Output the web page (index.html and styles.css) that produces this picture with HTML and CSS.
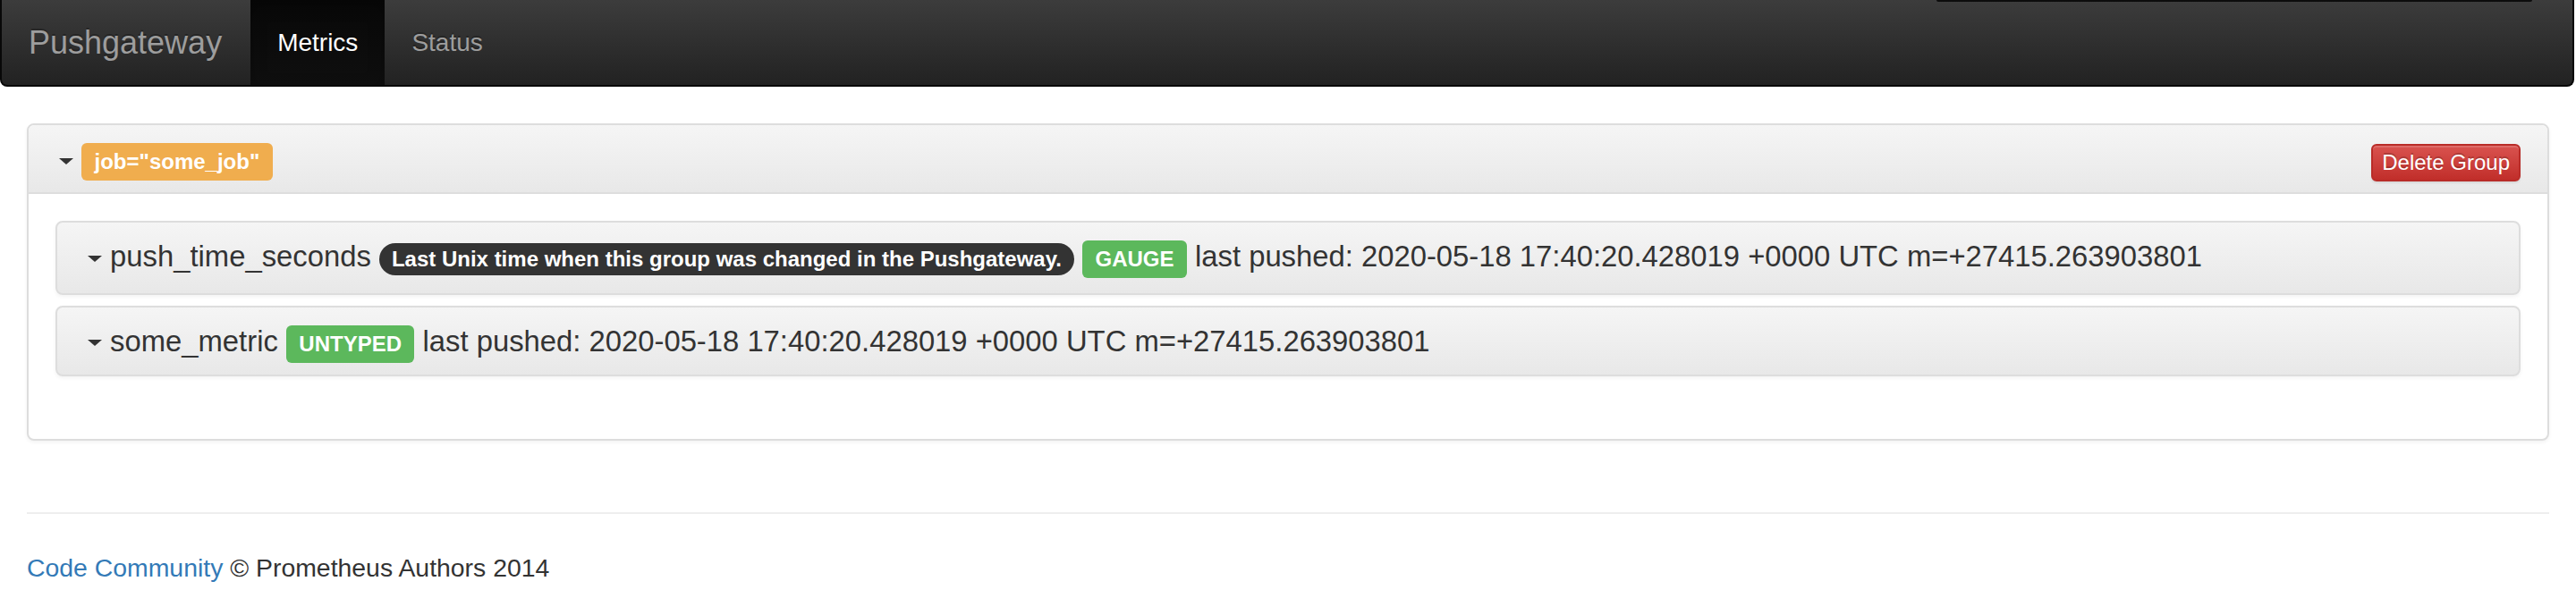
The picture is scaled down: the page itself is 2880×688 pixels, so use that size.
FILE: index.html
```html
<!DOCTYPE html>
<html lang="en">
<head>
<meta charset="utf-8">
<title>Pushgateway</title>
<link rel="stylesheet" href="styles.css">
</head>
<body>
<nav class="navbar">
  <div class="navbar-edge"></div>
  <a class="brand" href="#">Pushgateway</a>
  <ul class="nav">
    <li class="active"><a href="#">Metrics</a></li>
    <li><a href="#">Status</a></li>
  </ul>
</nav>

<div class="container">
  <div class="panel">
    <div class="panel-heading">
      <button class="btn-delete" type="button">Delete Group</button>
      <h4 class="panel-title"><span class="caret"></span> <span class="label label-warning">job="some_job"</span></h4>
    </div>
    <div class="panel-body">
      <div class="metric-list">
        <div class="metric">
          <h4 class="panel-title"><span class="caret"></span> push_time_seconds <span class="badge">Last Unix time when this group was changed in the Pushgateway.</span> <span class="label label-success">GAUGE</span> last pushed: 2020-05-18 17:40:20.428019 +0000 UTC m=+27415.263903801</h4>
        </div>
        <div class="metric">
          <h4 class="panel-title"><span class="caret"></span> some_metric <span class="label label-success">UNTYPED</span> last pushed: 2020-05-18 17:40:20.428019 +0000 UTC m=+27415.263903801</h4>
        </div>
      </div>
    </div>
  </div>

  <hr class="rule">
  <p class="footer"><a href="#">Code Community</a> © Prometheus Authors 2014</p>
</div>
</body>
</html>
```

FILE: styles.css
```css
html, body {
  margin: 0;
  padding: 0;
  background: #fff;
}

body {
  font-family: "Liberation Sans", Arial, Helvetica, sans-serif;
  font-size: 28px;
  line-height: 40px;
  color: #333;
}

/* ---------- navbar ---------- */
.navbar {
  position: relative;
  display: flex;
  height: 95px;
  margin: 0 2px 41px 0;
  background: linear-gradient(to bottom, #3c3c3c 0%, #222 100%);
  border: 2px solid #080808;
  border-top: 0;
  border-radius: 0 0 8px 8px;
}

.navbar-edge {
  position: absolute;
  top: 0;
  left: 2163px;
  width: 666px;
  height: 2px;
  background: #0c0c0c;
  border-radius: 0 0 3px 3px;
}

.brand {
  display: block;
  padding: 28px 32px 0 30px;
  font-size: 36px;
  line-height: 40px;
  color: #9d9d9d;
  text-decoration: none;
  text-shadow: 0 -2px 0 rgba(0, 0, 0, .25);
}

.nav {
  display: flex;
  margin: 0;
  padding: 0;
  list-style: none;
}

.nav li {
  display: flex;
}

.nav a {
  display: block;
  padding: 28px 30px 0;
  color: #9d9d9d;
  text-decoration: none;
  text-shadow: 0 -2px 0 rgba(0, 0, 0, .25);
}

.nav .active a {
  color: #fff;
  background: linear-gradient(to bottom, #080808 0%, #0f0f0f 100%);
  box-shadow: inset 0 6px 18px rgba(0, 0, 0, .25);
}

/* ---------- content ---------- */
.container {
  padding: 0 30px;
}

.panel {
  background: #fff;
  border: 2px solid #ddd;
  border-radius: 8px;
  margin-bottom: 40px;
  box-shadow: 0 2px 4px rgba(0, 0, 0, .05);
}

.panel-heading {
  padding: 20px 30px;
  background: linear-gradient(to bottom, #f5f5f5 0%, #e8e8e8 100%);
  border-bottom: 2px solid #ddd;
  border-radius: 6px 6px 0 0;
}

.panel-title {
  margin: 0;
  font-size: 32.8px;
  line-height: 35.2px;
  font-weight: 500;
  color: #333;
}

.panel-body {
  padding: 30px;
}

.metric-list {
  display: flex;
  flex-direction: column;
  gap: 12px;
  margin-bottom: 40px;
}

.metric {
  padding: 20px 30px;
  background: linear-gradient(to bottom, #f5f5f5 0%, #e8e8e8 100%);
  border: 2px solid #ddd;
  border-radius: 8px;
  box-shadow: 0 2px 4px rgba(0, 0, 0, .05);
}

.caret {
  display: inline-block;
  width: 0;
  height: 0;
  margin-left: 4px;
  vertical-align: middle;
  border-top: 7px solid #333;
  border-left: 8px solid transparent;
  border-right: 8px solid transparent;
}

.label {
  display: inline;
  font-size: 24px;
  font-weight: 700;
  line-height: 1;
  padding: 7px 14.4px 8px;
  border-radius: 6px;
  color: #fff;
  white-space: nowrap;
}

.label-warning {
  background: #f0ad4e;
}

.label-success {
  background: #5cb85c;
}

.badge {
  display: inline-block;
  font-size: 24px;
  font-weight: 700;
  line-height: 1;
  padding: 6px 14px;
  border-radius: 20px;
  background: #333;
  color: #fff;
  vertical-align: middle;
  white-space: nowrap;
}

.btn-delete {
  float: right;
  margin-top: 1px;
  padding: 2px 10px;
  font-family: inherit;
  font-size: 24px;
  line-height: 34px;
  color: #fff;
  background: linear-gradient(to bottom, #d9534f 0%, #c12e2a 100%);
  border: 2px solid #b92c28;
  border-radius: 6px;
  text-shadow: 0 -2px 0 rgba(0, 0, 0, .2);
  box-shadow: inset 0 2px 0 rgba(255, 255, 255, .15), 0 2px 2px rgba(0, 0, 0, .075);
  cursor: pointer;
}

/* ---------- footer ---------- */
.rule {
  margin: 80px 0 40px;
  border: 0;
  border-top: 2px solid #eee;
  height: 0;
}

.footer {
  margin: 0;
  font-size: 28.4px;
}

.footer a {
  color: #337ab7;
  text-decoration: none;
}
```
